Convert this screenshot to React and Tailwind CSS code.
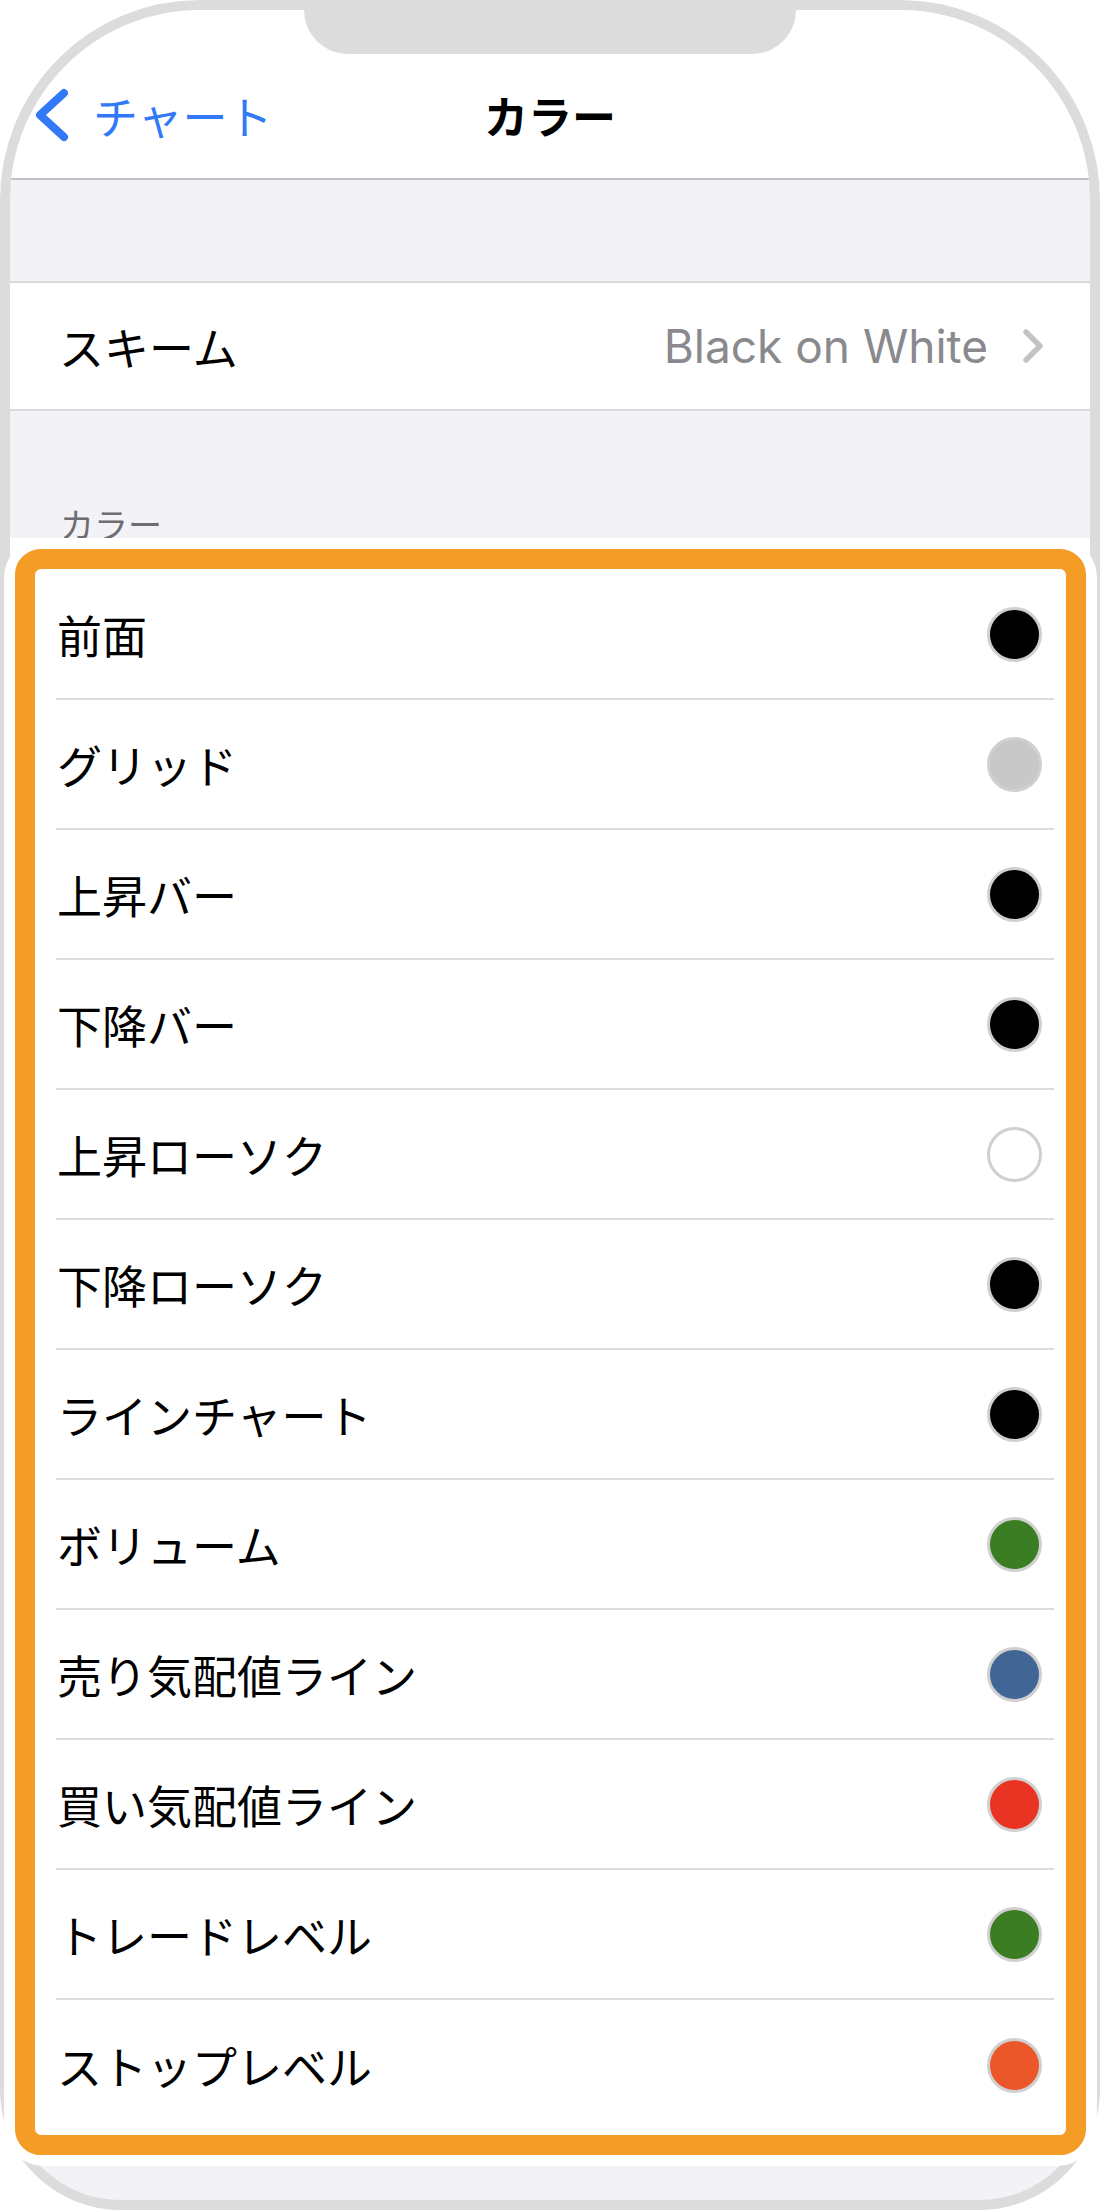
const ROWS = [
  { label: '前面', color: '#000000' },
  { label: 'グリッド', color: '#c8c8c8' },
  { label: '上昇バー', color: '#000000' },
  { label: '下降バー', color: '#000000' },
  { label: '上昇ローソク', color: '#ffffff' },
  { label: '下降ローソク', color: '#000000' },
  { label: 'ラインチャート', color: '#000000' },
  { label: 'ボリューム', color: '#3a7d22' },
  { label: '売り気配値ライン', color: '#416696' },
  { label: '買い気配値ライン', color: '#e93424' },
  { label: 'トレードレベル', color: '#3a7d22' },
  { label: 'ストップレベル', color: '#ec572a' },
]

const JP = "font-['Noto_Sans_CJK_JP',sans-serif]"

export default function App() {
  return (
    <div className="relative w-[1100px] h-[2210px] bg-white">
      {/* phone frame */}
      <div className="relative flex flex-col w-full h-full border-[10px] border-[#dcdcdc] rounded-t-[200px] rounded-b-[120px] overflow-hidden bg-[#f2f2f7]">
        <div className="absolute top-0 left-1/2 -translate-x-1/2 w-[492px] h-[44px] bg-[#dcdcdc] rounded-b-[46px] z-10" />

        {/* nav bar */}
        <div className="h-[170px] shrink-0 bg-white border-b-2 border-[#c2c2c6] pt-[70px]">
          <div className="grid grid-cols-[1fr_auto_1fr] items-center h-[70px]">
            <div className="flex items-center pl-[25px] gap-[24px] text-[#3179f6]">
              <svg width="34" height="54" viewBox="0 0 34 54" fill="none">
                <polyline points="29,5 5,27 29,49" stroke="currentColor" strokeWidth="8" strokeLinecap="round" strokeLinejoin="round" />
              </svg>
              <span className={`${JP} text-[45px] leading-none`}>チャート</span>
            </div>
            <div className={`${JP} text-[44px] font-bold leading-none text-black`}>カラー</div>
            <div />
          </div>
        </div>

        <div className="h-[101px] shrink-0" />

        {/* scheme */}
        <div className="h-[130px] shrink-0 bg-white border-y-2 border-[#d9d9dd] flex items-center justify-between pl-[49px] pr-[46px]">
          <span className={`${JP} text-[45px] leading-none text-black`}>スキーム</span>
          <div className="flex items-center gap-[34px]">
            <span className="font-['Inter','Noto_Sans_CJK_JP',sans-serif] text-[46px] leading-none text-[#8a8a8e]">Black on White</span>
            <svg width="22" height="36" viewBox="0 0 22 36" fill="none">
              <polyline points="4,4 18,18 4,32" stroke="#c4c4c7" strokeWidth="5.5" strokeLinecap="round" strokeLinejoin="round" />
            </svg>
          </div>
        </div>

        <div className="h-[127px] shrink-0 overflow-hidden pl-[50px] pt-[96px]">
          <span className={`${JP} text-[34px] leading-none text-[#6d6d72]`}>カラー</span>
        </div>

        {/* colour list */}
        <div className="h-[1628px] shrink-0 bg-white pt-[32px]">
          {ROWS.map((r, i) => (
            <div
              key={r.label}
              className={`ml-[46px] mr-[36px] h-[130px] flex items-center justify-between ${i < ROWS.length - 1 ? 'border-b-2 border-[#dedee0]' : ''}`}
            >
              <span className={`${JP} text-[45px] leading-none text-black pl-[1px]`}>{r.label}</span>
              <span
                className="mr-[12px] w-[55px] h-[55px] rounded-full border-[3px] border-[#d0d0d0]"
                style={{ backgroundColor: r.color }}
              />
            </div>
          ))}
        </div>

        <div className="flex-1" />
      </div>

      {/* highlight */}
      <div className="absolute left-[4px] top-[538px] w-[1093px] h-[1628px] rounded-[40px] border-[11px] border-white pointer-events-none">
        <div className="w-full h-full rounded-[26px] border-[20px] border-[#f49c25]" />
      </div>
    </div>
  )
}
